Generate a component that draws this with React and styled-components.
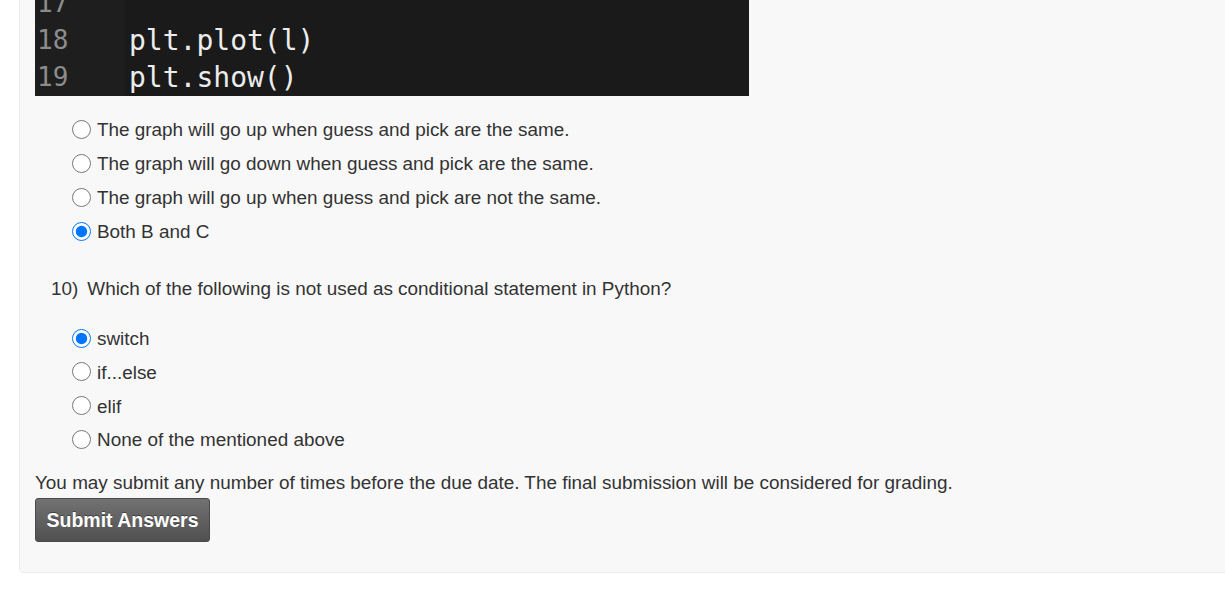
import React from 'react';
import styled, { createGlobalStyle } from 'styled-components';

const GlobalStyle = createGlobalStyle`
  html, body {
    margin: 0;
    padding: 0;
    background: #ffffff;
    overflow: hidden;
  }
  body {
    font-family: "Liberation Sans", Arial, sans-serif;
    color: #333333;
  }
`

const Page = styled.div`
  margin-top: -30px;
  padding-left: 19px;
  margin-right: -12px;
`

const Panel = styled.div`
  background: #f8f8f8;
  border: 1px solid #ececec;
  border-top: none;
  border-radius: 0 0 5px 5px;
  padding: 0 15px 30px 15px;
`

const CodeShot = styled.div`
  display: flex;
  width: 714px;
  background: #1a1a1a;
  padding-top: 15px;
  font-family: "DejaVu Sans Mono", "Liberation Mono", monospace;
`

const Gutter = styled.div`
  width: 88px;
  background: #1e1e1e;
  color: #8c8c8c;
  font-size: 26px;
  padding-left: 2px;
`

const CodeBody = styled.div`
  padding-left: 4px;
  color: #ececec;
  font-size: 28px;
`

const CodeLine = styled.div`
  height: 37px;
  line-height: 37px;
  white-space: pre;
`

const Options = styled.div`
  display: flex;
  flex-direction: column;
  padding-left: 37px;
  margin-top: ${p => p.$top || 0}px;
`

const Option = styled.label`
  display: flex;
  align-items: center;
  height: ${p => p.$h || 34}px;
  font-size: 18.9px;
`

const Radio = styled.input.attrs({ type: 'radio' })`
  width: 19px;
  height: 19px;
  margin: 0 6px 2px 0;
  accent-color: #0075ff;
`

const Question = styled.div`
  display: flex;
  align-items: center;
  height: 26px;
  margin-top: 27px;
  padding-left: 16px;
  font-size: 18.9px;
`

const Num = styled.span`
  margin-right: 9px;
`

const Note = styled.div`
  margin-top: 13px;
  height: 26px;
  line-height: 26px;
  font-size: 18.9px;
`

const SubmitButton = styled.button`
  margin-top: 2px;
  width: 175px;
  height: 44px;
  border: 1px solid #4a4a4a;
  border-radius: 3px;
  background: linear-gradient(#727272, #505050);
  color: #ffffff;
  font-family: "Liberation Sans", Arial, sans-serif;
  font-weight: bold;
  font-size: 19.5px;
  text-shadow: 0 -1px 0 rgba(0, 0, 0, 0.4);
  cursor: pointer;
`

const firstChoices = [
  'The graph will go up when guess and pick are the same.',
  'The graph will go down when guess and pick are the same.',
  'The graph will go up when guess and pick are not the same.',
  'Both B and C',
];

const secondChoices = ['switch', 'if...else', 'elif', 'None of the mentioned above'];

export default function App() {
  return (
    <Page>
      <GlobalStyle />
      <Panel>
        <CodeShot>
          <Gutter>
            <CodeLine>17</CodeLine>
            <CodeLine>18</CodeLine>
            <CodeLine>19</CodeLine>
          </Gutter>
          <CodeBody>
            <CodeLine> </CodeLine>
            <CodeLine>plt.plot(l)</CodeLine>
            <CodeLine>plt.show()</CodeLine>
          </CodeBody>
        </CodeShot>

        <Options $top={17}>
          {firstChoices.map((c, i) => (
            <Option key={c}>
              <Radio name="q9" defaultChecked={i === 3} />
              {c}
            </Option>
          ))}
        </Options>

        <Question>
          <Num>10)</Num>
          Which of the following is not used as conditional statement in Python?
        </Question>

        <Options $top={20}>
          {secondChoices.map((c, i) => (
            <Option key={c} $h={i === 0 ? 34 : 33.7}>
              <Radio name="q10" defaultChecked={i === 0} />
              {c}
            </Option>
          ))}
        </Options>

        <Note>
          You may submit any number of times before the due date. The final submission will be considered for grading.
        </Note>
        <SubmitButton>Submit Answers</SubmitButton>
      </Panel>
    </Page>
  );
}
